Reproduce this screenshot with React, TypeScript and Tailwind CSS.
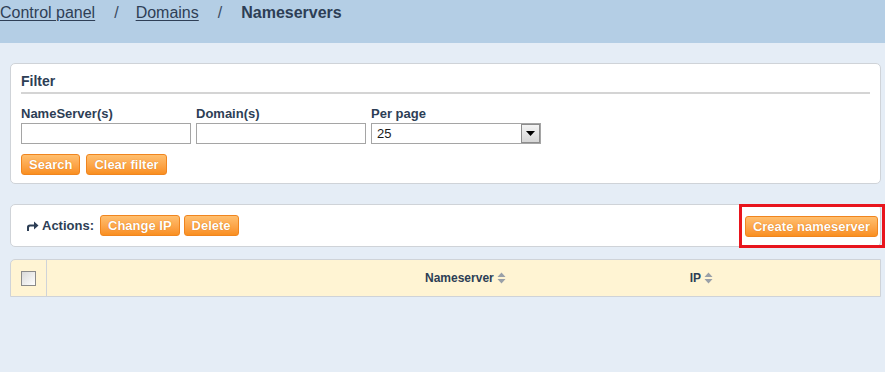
const btn =
  "h-[21px] rounded-[3px] border border-[#f0851f] bg-gradient-to-b from-[#ffbf6e] to-[#f98f1e] px-[7px] text-[13px] font-bold leading-[19px] text-white [text-shadow:0_0_1px_#d06a00]";

function SortIcon() {
  return (
    <svg width="9" height="12" viewBox="0 0 9 12" className="ml-[3px] inline-block">
      <path d="M4.5 0.5 L8.5 5 L0.5 5 Z" fill="#9aa0a8" />
      <path d="M4.5 11.5 L8.5 7 L0.5 7 Z" fill="#9aa0a8" />
    </svg>
  );
}

export default function App() {
  return (
    <div
      className="min-h-[372px] bg-[#e5edf6] text-[#2d3e55]"
      style={{ fontFamily: '"Liberation Sans", Arial, sans-serif' }}
    >
      <div className="flex h-[43px] items-start gap-[19px] bg-[#b4cee5] pt-[3px] text-[16px] leading-[20px]">
        <a className="underline decoration-1 underline-offset-2 text-[#2f3f56]">Control panel</a>
        <span className="text-[#3a4a60]">/</span>
        <a className="-ml-[2px] underline decoration-1 underline-offset-2 text-[#2f3f56]">Domains</a>
        <span className="text-[#3a4a60]">/</span>
        <span className="font-bold text-[#2d3e55]">Nameservers</span>
      </div>

      <div className="ml-[10px] mr-[4px] mt-[20px] rounded-[5px] border border-[#cfd3d8] bg-white px-[10px] pb-[8px] pt-[9px]">
        <div className="border-b-2 border-[#d4d4d4] pb-[2px] text-[14px] font-bold leading-[17px]">Filter</div>
        <div className="mt-[12px] flex gap-[5px]">
          <div className="flex flex-col">
            <label className="text-[13px] font-bold leading-[16px]">NameServer(s)</label>
            <input className="mt-[1px] h-[21px] w-[170px] border border-[#a5a5a5] bg-white" />
          </div>
          <div className="flex flex-col">
            <label className="text-[13px] font-bold leading-[16px]">Domain(s)</label>
            <input className="mt-[1px] h-[21px] w-[170px] border border-[#a5a5a5] bg-white" />
          </div>
          <div className="flex flex-col">
            <label className="text-[13px] font-bold leading-[16px]">Per page</label>
            <div className="mt-[1px] flex h-[21px] w-[170px] items-center border border-[#a5a5a5] bg-white">
              <span className="flex-1 pl-[5px] text-[13px] leading-[16px] text-[#1a1a1a]">25</span>
              <span className="flex h-[19px] w-[19px] items-center justify-center border border-[#8d8d8d] bg-gradient-to-b from-[#f4f4f4] to-[#d6d6d6]">
                <svg width="9" height="5" viewBox="0 0 9 5">
                  <path d="M0 0 H9 L4.5 5 Z" fill="#000" />
                </svg>
              </span>
            </div>
          </div>
        </div>
        <div className="mt-[10px] flex gap-[6px]">
          <button className={btn}>Search</button>
          <button className={btn}>Clear filter</button>
        </div>
      </div>

      <div className="ml-[10px] mr-[4px] mt-[20px] flex h-[43px] items-center rounded-[5px] border border-[#cfd3d8] bg-white pl-[15px]">
        <svg width="13" height="10" viewBox="0 0 13 10" className="mr-[3px] mt-[1px]">
          <path d="M1 10 V6 Q1 3.5 4 3.5 H8 V0.5 L12.5 4.5 L8 8.5 V5.5 H4 Q3 5.5 3 7 V10 Z" fill="#2d3e55" />
        </svg>
        <span className="text-[13px] font-bold">Actions:</span>
        <button className={`${btn} ml-[6px]`}>Change IP</button>
        <button className={`${btn} ml-[4px]`}>Delete</button>
        <div className="flex-1" />
        <div className="-mr-[5px] -mt-[1px] flex h-[44px] items-center self-start border-[3px] border-[#e8151d] pl-[3px] pr-[4px]">
          <button className={`${btn} px-[6px]`}>Create nameserver</button>
        </div>
      </div>

      <div className="ml-[10px] mr-[4px] mt-[12px] flex h-[38px] items-center rounded-tl-[5px] border border-[#cfd3d8] bg-[#fff4d3] text-[12px] font-bold">
        <div className="flex h-full w-[36px] items-center justify-center border-r border-[#cfd3d8]">
          <div className="h-[15px] w-[15px] border border-[#8a8a8a] bg-gradient-to-br from-[#d9d9d9] to-white" />
        </div>
        <div className="flex items-center pl-[378px]">
          Nameserver
          <SortIcon />
        </div>
        <div className="ml-[184px] flex items-center">
          IP
          <SortIcon />
        </div>
      </div>
    </div>
  );
}
